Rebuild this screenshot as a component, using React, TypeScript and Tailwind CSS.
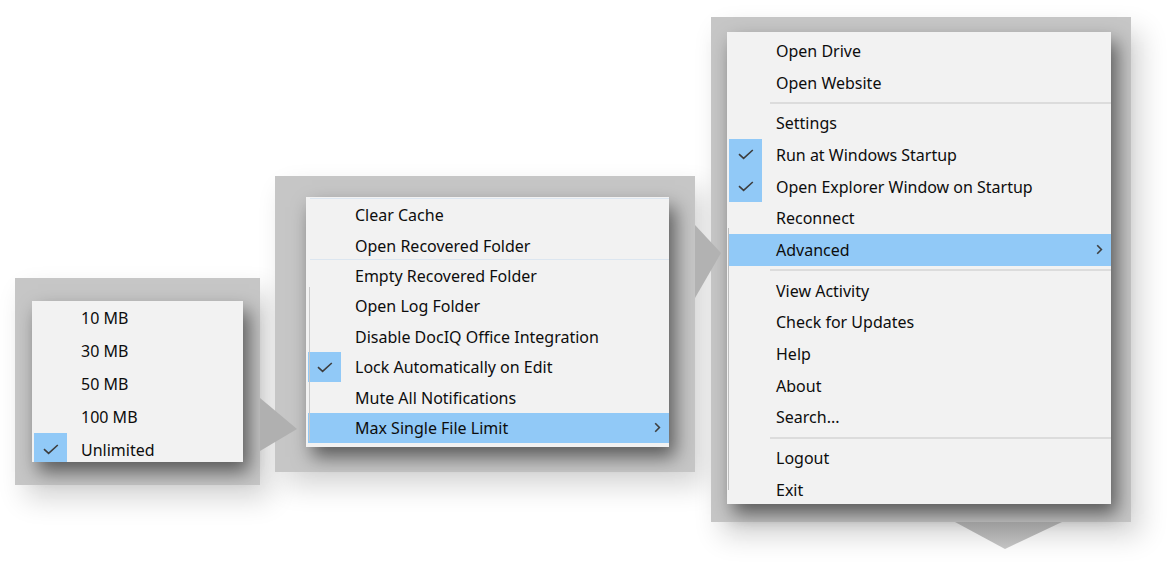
import React from "react";

type Item =
  | { type: "sep" }
  | { type: "item"; label: string; checked?: boolean; active?: boolean; sub?: boolean };

const Check = () => (
  <svg width="16" height="11" viewBox="0 0 16 11" fill="none">
    <path d="M1 5.2 L5.6 9.4 L14.8 1" stroke="#3d3d3d" strokeWidth="1.6" />
  </svg>
);

const Chevron = () => (
  <svg width="7" height="11" viewBox="0 0 7 11" fill="none">
    <path d="M1.2 1.2 L5.4 5.5 L1.2 9.8" stroke="#3f3f3f" strokeWidth="1.6" />
  </svg>
);

function Row({
  label,
  checked,
  active,
  sub,
  h,
}: {
  label: string;
  checked?: boolean;
  active?: boolean;
  sub?: boolean;
  h: string;
}) {
  return (
    <div className={`relative flex items-center ${h}`}>
      <div className={`flex h-full w-full items-center ml-[2px] ${active ? "bg-[#91c9f7]" : ""}`}>
        <div className={`flex h-full w-[33px] flex-none items-center justify-center ${checked ? "bg-[#91c9f7]" : ""}`}>
          {checked ? <Check /> : null}
        </div>
        <span className="ml-[14px] flex-1 whitespace-nowrap text-[#0d0d0d]">{label}</span>
        {sub ? (
          <span className="mr-[8px] flex items-center">
            <Chevron />
          </span>
        ) : null}
      </div>
    </div>
  );
}

const font = { fontFamily: '"Noto Sans", "Open Sans", sans-serif' };

export default function App() {
  const menu3: Item[] = [
    { type: "item", label: "Open Drive" },
    { type: "item", label: "Open Website" },
    { type: "sep" },
    { type: "item", label: "Settings" },
    { type: "item", label: "Run at Windows Startup", checked: true },
    { type: "item", label: "Open Explorer Window on Startup", checked: true },
    { type: "item", label: "Reconnect" },
    { type: "item", label: "Advanced", active: true, sub: true },
    { type: "sep" },
    { type: "item", label: "View Activity" },
    { type: "item", label: "Check for Updates" },
    { type: "item", label: "Help" },
    { type: "item", label: "About" },
    { type: "item", label: "Search..." },
    { type: "sep" },
    { type: "item", label: "Logout" },
    { type: "item", label: "Exit" },
  ];

  const menu2 = [
    { label: "Clear Cache" },
    { label: "Open Recovered Folder" },
    { label: "Empty Recovered Folder" },
    { label: "Open Log Folder" },
    { label: "Disable DocIQ Office Integration" },
    { label: "Lock Automatically on Edit", checked: true },
    { label: "Mute All Notifications" },
    { label: "Max Single File Limit", active: true, sub: true },
  ];

  const menu1 = [
    { label: "10 MB" },
    { label: "30 MB" },
    { label: "50 MB" },
    { label: "100 MB" },
    { label: "Unlimited", checked: true },
  ];

  return (
    <div
      className="relative flex h-[569px] w-[1176px] items-start overflow-hidden bg-white pl-[15px] text-[16px] leading-none"
      style={font}
    >
      {/* Frame 1 */}
      <div className="mt-[278px] h-[207px] w-[245px] flex-none bg-[#c6c6c6] pl-[17px] pt-[23px] shadow-[10px_14px_26px_rgba(0,0,0,0.16)]">
        <div className="h-[161px] w-[211px] overflow-hidden bg-[#f2f2f2] shadow-[6px_10px_18px_rgba(0,0,0,0.55)]">
          {menu1.map((m) => (
            <Row key={m.label} label={m.label} checked={m.checked} h="h-[33px]" />
          ))}
        </div>
      </div>

      {/* Frame 2 */}
      <div className="ml-[15px] mt-[176px] h-[296px] w-[420px] flex-none bg-[#c6c6c6] pl-[31px] pt-[21px] shadow-[10px_14px_26px_rgba(0,0,0,0.16)]">
        <div className="relative h-[250px] w-[363px] overflow-hidden bg-[#f2f2f2] pt-[3px] shadow-[6px_10px_18px_rgba(0,0,0,0.55)]">
          {menu2.map((m) => (
            <Row key={m.label} label={m.label} checked={m.checked} active={m.active} sub={m.sub} h="h-[30.4px]" />
          ))}
          <div className="absolute left-[4px] right-0 top-[1px] h-px bg-[#dce6f0]" />
          <div className="absolute left-[4px] right-0 top-[62px] h-px bg-[#dce6f0]" />
          <div className="absolute left-[3px] top-[90px] h-[154px] w-px bg-[#c8c8c8]" />
        </div>
      </div>

      {/* Frame 3 */}
      <div className="ml-[16px] mt-[17px] h-[505px] w-[420px] flex-none bg-[#c6c6c6] pl-[16px] pt-[15px] shadow-[10px_14px_26px_rgba(0,0,0,0.16)]">
        <div className="relative h-[472px] w-[384px] overflow-hidden bg-[#f2f2f2] pt-[3px] shadow-[6px_10px_18px_rgba(0,0,0,0.55)]">
          {menu3.map((m, i) =>
            m.type === "sep" ? (
              <div key={i} className="flex h-[9px] items-center pl-[43px]">
                <div className="h-[2px] w-full bg-[#dcdcdc]" />
              </div>
            ) : (
              <Row key={i} label={m.label} checked={m.checked} active={m.active} sub={m.sub} h="h-[31.7px]" />
            )
          )}
          <div className="absolute left-[1px] top-[196px] h-[262px] w-px bg-[#bdbdbd]" />
        </div>
      </div>

      {/* Connector arrows */}
      <svg className="absolute left-0 top-0" width="1176" height="569" viewBox="0 0 1176 569">
        <defs>
          <linearGradient id="dn" x1="0" y1="0" x2="0" y2="1">
            <stop offset="0" stopColor="#9c9c9c" />
            <stop offset="1" stopColor="#c4c4c4" />
          </linearGradient>
        </defs>
        <polygon points="260,398 297,429 260,451" fill="#b0b0b0" />
        <polygon points="695,225 721,253 695,298" fill="#b2b2b2" />
        <polygon points="955,522 1062,522 1005,549" fill="url(#dn)" />
      </svg>
    </div>
  );
}
